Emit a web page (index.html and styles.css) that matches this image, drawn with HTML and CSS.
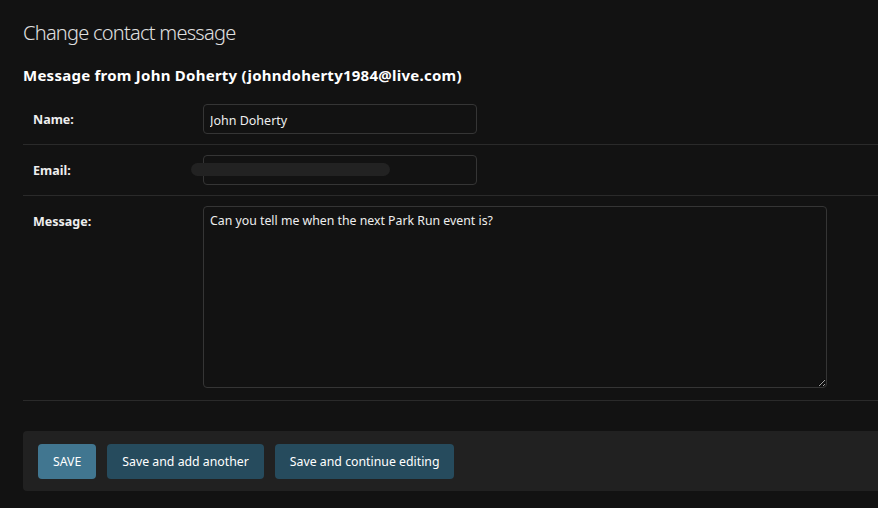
FILE: index.html
```html
<!DOCTYPE html>
<html lang="en">
<head>
<meta charset="utf-8">
<title>Change contact message</title>
<link rel="stylesheet" href="styles.css">
</head>
<body>
<div class="content">
  <h1 class="title">Change contact message</h1>
  <form class="form">
    <h2 class="subtitle">Message from John Doherty (johndoherty1984@live.com)</h2>
    <div class="fieldset">
      <div class="form-row">
        <label class="label" for="id_name">Name:</label>
        <input class="input" id="id_name" type="text" value="John Doherty">
      </div>
      <div class="form-row">
        <label class="label" for="id_email">Email:</label>
        <div class="redacted-wrap">
          <input class="input" id="id_email" type="text" value="">
          <span class="redacted"></span>
        </div>
      </div>
      <div class="form-row form-row-tall">
        <label class="label" for="id_message">Message:</label>
        <textarea class="textarea" id="id_message">Can you tell me when the next Park Run event is?</textarea>
      </div>
    </div>
    <div class="submit-row">
      <button type="button" class="btn btn-default">SAVE</button>
      <button type="button" class="btn">Save and add another</button>
      <button type="button" class="btn">Save and continue editing</button>
    </div>
  </form>
</div>
</body>
</html>
```
FILE: styles.css
```css
html, body {
  margin: 0;
  padding: 0;
  background: #121212;
  color: #eeeeee;
  font-family: "Noto Sans", "Open Sans", "DejaVu Sans", sans-serif;
  overflow: hidden;
}

.content {
  padding: 18px 0 0 23px;
  width: 900px;
}

.title {
  margin: 0;
  font-size: 20px;
  font-weight: 300;
  line-height: 30px;
  letter-spacing: -0.75px;
  color: #e0e0e0;
}

.subtitle {
  margin: 17px 0 0;
  font-size: 15px;
  font-weight: 700;
  line-height: 20px;
  color: #ffffff;
  letter-spacing: 0.25px;
}

.fieldset {
  margin-top: 9px;
}

.form-row {
  display: flex;
  align-items: flex-start;
  padding: 10px;
  border-bottom: 1px solid #2a2a2a;
  font-size: 13px;
}

.form-row-tall {
  padding-bottom: 12px;
}

.label {
  width: 160px;
  padding: 1px 10px 0 0;
  font-weight: 700;
  font-size: 12.5px;
  line-height: 29px;
  color: #eeeeee;
  flex: none;
}

.input {
  box-sizing: border-box;
  width: 274px;
  height: 30px;
  margin: 0;
  padding: 5px 6px 3px;
  background: #121212;
  color: #eeeeee;
  border: 1px solid #353535;
  border-radius: 4px;
  font-family: inherit;
  font-size: 12.5px;
  outline: none;
}

.redacted-wrap {
  position: relative;
}

.redacted {
  position: absolute;
  left: -12px;
  top: 8px;
  width: 199px;
  height: 13px;
  border-radius: 7px;
  background: #222222;
}

.textarea {
  box-sizing: border-box;
  width: 624px;
  height: 182px;
  margin: 0;
  padding: 5px 6px;
  background: #121212;
  color: #eeeeee;
  border: 1px solid #353535;
  border-radius: 4px;
  font-family: inherit;
  font-size: 12.3px;
  line-height: 18px;
  resize: both;
  outline: none;
  display: block;
}

.submit-row {
  display: flex;
  gap: 11px;
  margin-top: 30px;
  padding: 13px 15px 12px;
  background: #212121;
  border-radius: 4px;
}

.btn {
  height: 35px;
  padding: 0 15px;
  border: none;
  border-radius: 4px;
  background: #264b5d;
  color: #ffffff;
  font-family: inherit;
  font-size: 12.3px;
  cursor: pointer;
}

.btn-default {
  background: #417690;
}
```
